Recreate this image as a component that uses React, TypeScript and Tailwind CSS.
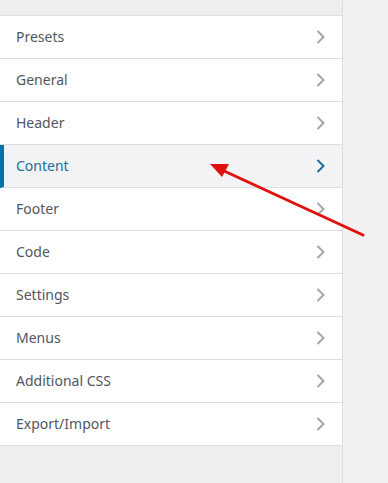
import React from "react";

const items = ["Presets","General","Header","Content","Footer","Code","Settings","Menus","Additional CSS","Export/Import"];

function Chevron({ active }: { active: boolean }) {
  return (
    <svg width="12" height="16" viewBox="0 0 12 16" className="shrink-0">
      <path d="M3.5 2 L9.5 8 L3.5 14" fill="none" stroke={active ? "#1a6f98" : "#a0a5aa"} strokeWidth="2" />
    </svg>
  );
}

export default function App() {
  return (
    <div className="relative flex w-[388px] h-[483px] overflow-hidden" style={{ fontFamily: '"Segoe UI", "Noto Sans", sans-serif' }}>
      <div className="w-[343px] h-full bg-[#eeeeee] border-r border-[#dddddd] pt-[15px]">
        <ul className="border-t border-[#dddddd]">
          {items.map((it) => {
            const active = it === "Content";
            return (
              <li
                key={it}
                className={`flex items-center justify-between h-[43px] border-b border-[#dddddd] pr-[16px] ${active ? "bg-[#f3f3f5] border-l-[4px] border-l-[#0073aa] pl-[12px] text-[#1a6f98]" : "bg-white pl-[16px] text-[#50575e]"}`}
              >
                <span className="text-[14px] leading-none">{it}</span>
                <Chevron active={active} />
              </li>
            );
          })}
        </ul>
      </div>
      <div className="flex-1 h-full bg-[#f1f1f1]" />
      <svg className="absolute left-0 top-0 pointer-events-none" width="388" height="483">
        <line x1="363" y1="235" x2="222" y2="170" stroke="#e01010" strokeWidth="3" strokeLinecap="round" />
        <polygon points="210,164 229,164 222,177" fill="#e01010" />
      </svg>
    </div>
  );
}
